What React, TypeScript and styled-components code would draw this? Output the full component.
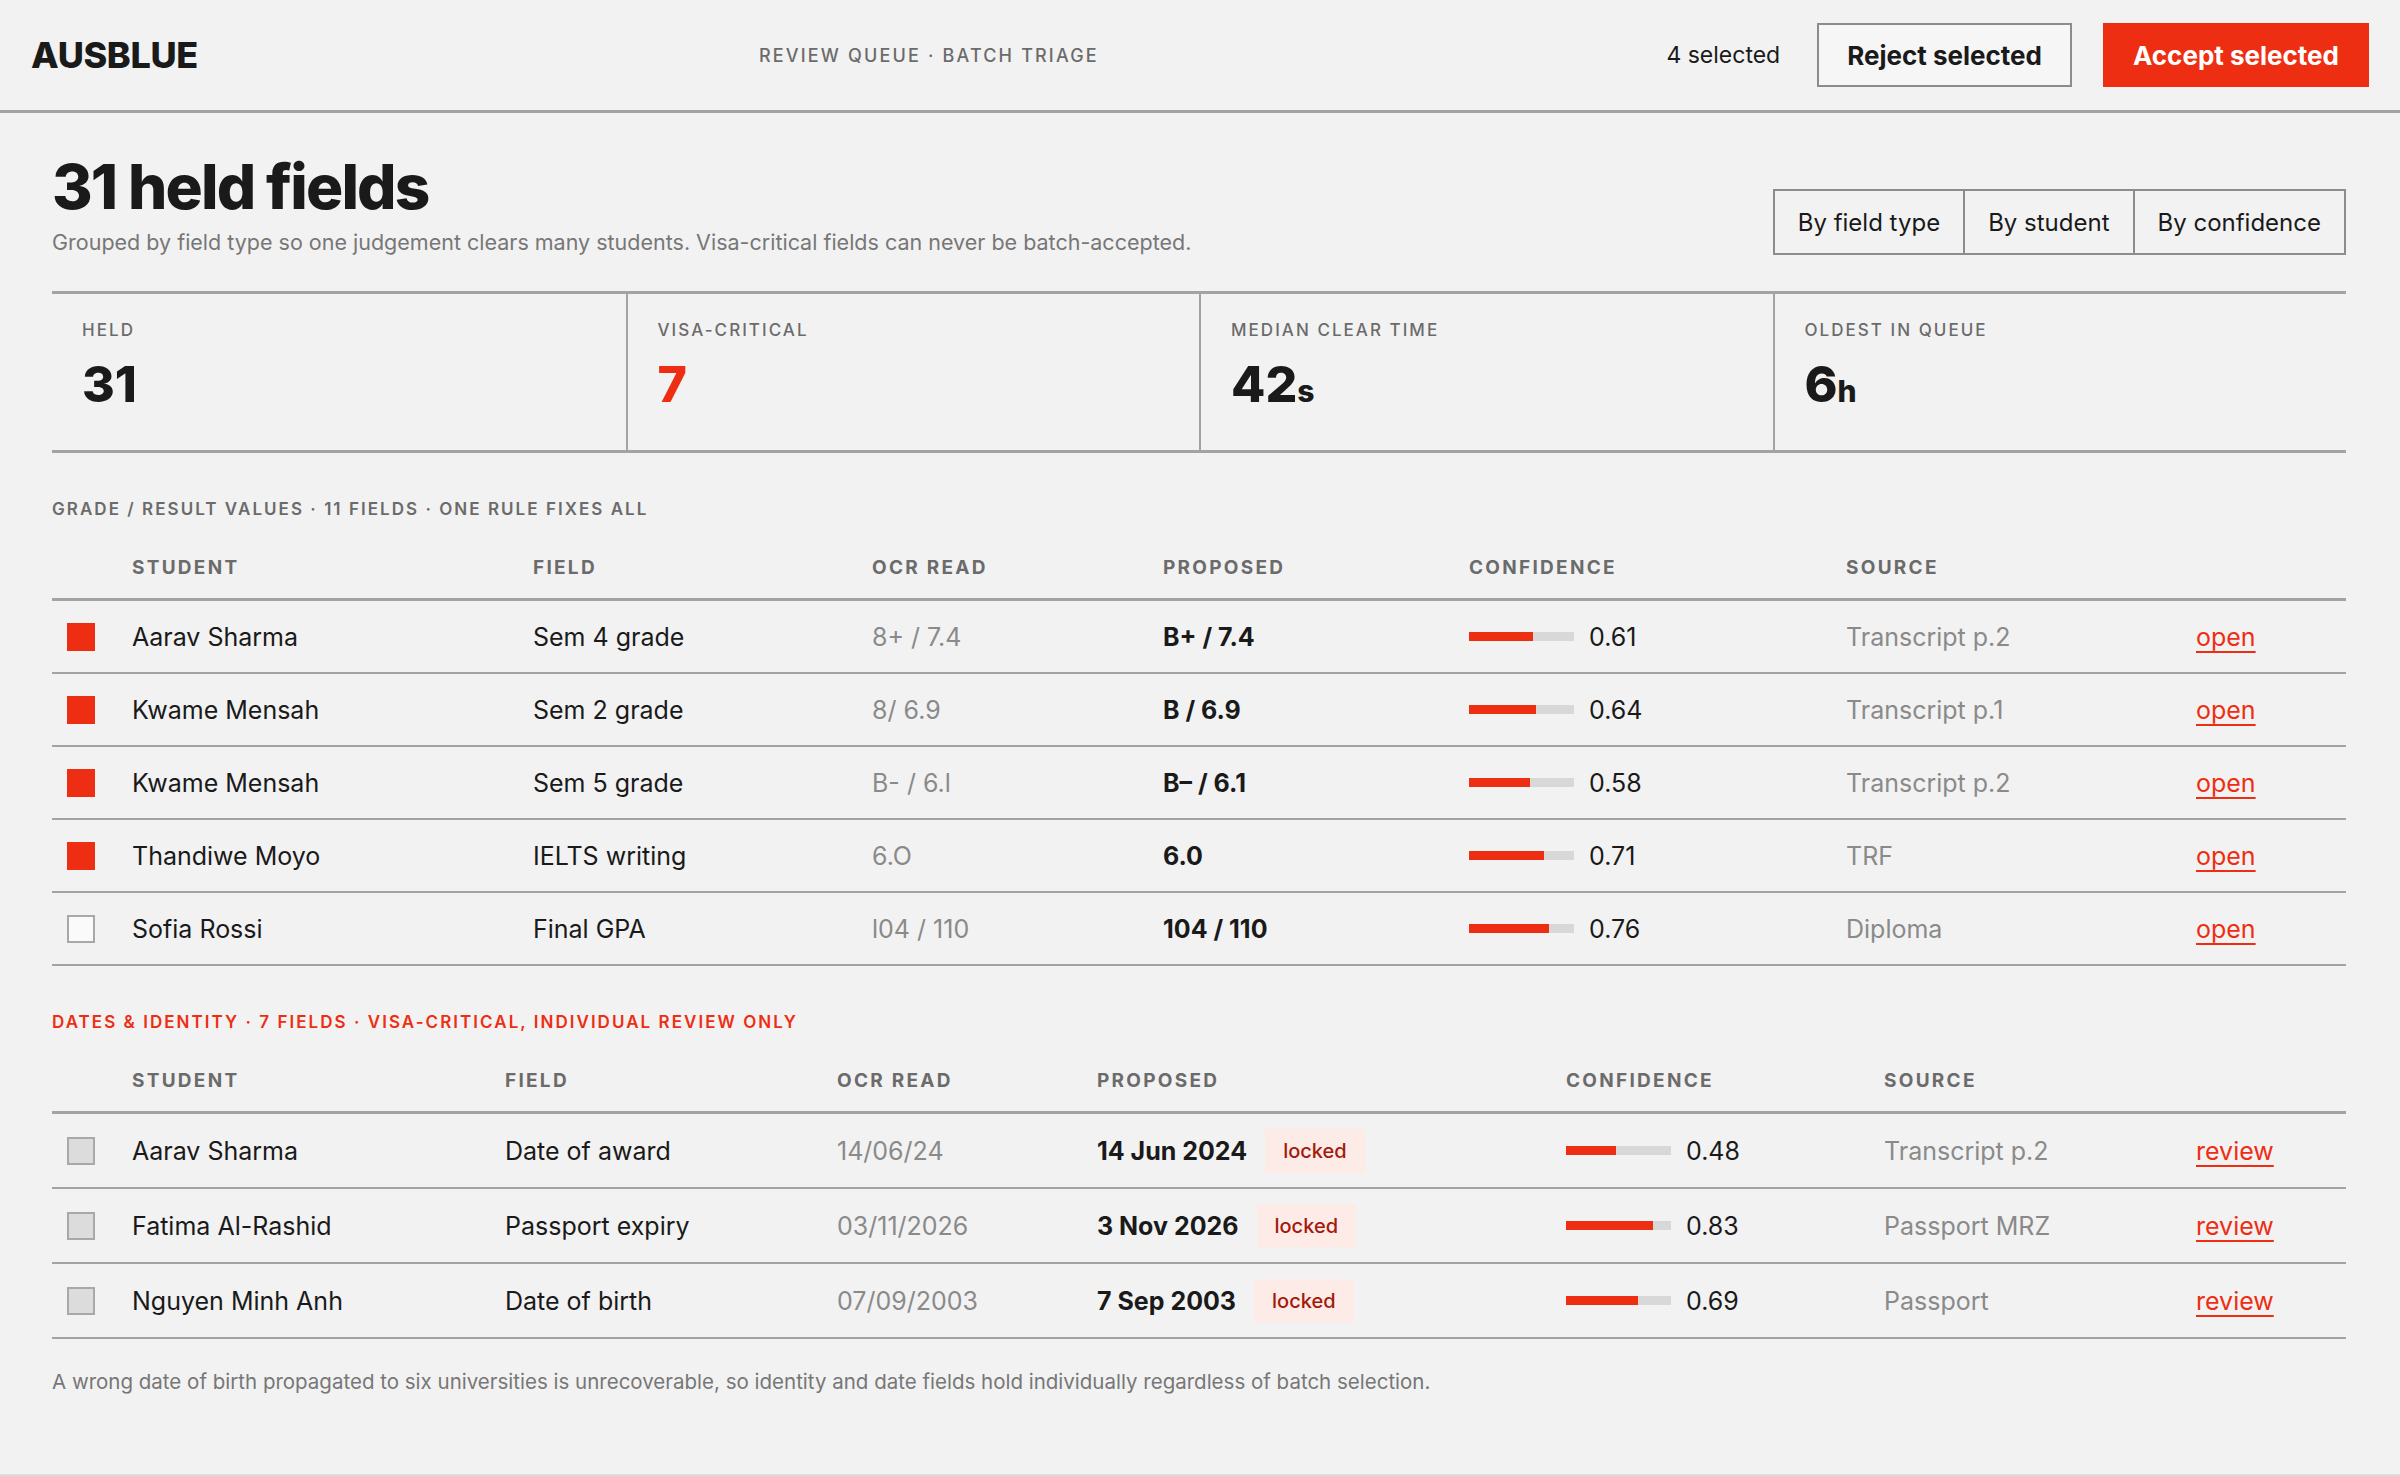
import React from "react";
import styled, { createGlobalStyle } from "styled-components";

const RED = "#ee2e12";
const LINE = "#a3a3a3";

const GlobalStyle = createGlobalStyle`
  body {
    margin: 0;
    background: #f2f2f2;
    font-family: Inter, "Liberation Sans", sans-serif;
    color: #1a1a1a;
  }
`;

const Page = styled.div`
  min-height: 1474px;
  border-bottom: 2px solid #dcdcdc;
`;

const TopBar = styled.header`
  height: 110px;
  border-bottom: 3px solid ${LINE};
  display: flex;
  align-items: center;
  padding: 0 31px;
`;

const Logo = styled.div`
  font-size: 36px;
  font-weight: 800;
  letter-spacing: -0.01em;
  width: 728px;
`;

const Crumb = styled.div`
  flex: 1;
  font-size: 18px;
  letter-spacing: 0.12em;
  color: #6b6b6b;
  font-weight: 500;
`;

const Selected = styled.span`
  font-size: 23px;
  margin-right: 6px;
`;

const Button = styled.button<{ $primary?: boolean }>`
  height: 64px;
  padding: 0 28px;
  font-family: inherit;
  font-size: 26px;
  font-weight: 700;
  margin-left: 31px;
  border: 2px solid ${(p) => (p.$primary ? RED : "#8c8c8c")};
  background: ${(p) => (p.$primary ? RED : "#f6f6f6")};
  color: ${(p) => (p.$primary ? "#fff" : "#1a1a1a")};
`;

const Main = styled.main`
  padding: 40px 54px 0 52px;
`;

const TitleRow = styled.div`
  display: flex;
  justify-content: space-between;
  align-items: flex-end;
`;

const Title = styled.h1`
  margin: 0;
  font-size: 62px;
  font-weight: 800;
  letter-spacing: -0.03em;
  line-height: 1.1;
`;

const Sub = styled.p`
  margin: 8px 0 0;
  font-size: 21.5px;
  color: #777;
`;

const Segments = styled.div`
  display: flex;
  border: 2px solid #8c8c8c;
  margin-bottom: 0;
`;

const Segment = styled.div`
  height: 62px;
  padding: 0 23px;
  display: flex;
  align-items: center;
  font-size: 24px;
  & + & {
    border-left: 2px solid #8c8c8c;
  }
`;

const Stats = styled.div`
  margin-top: 36px;
  display: grid;
  grid-template-columns: repeat(4, 1fr);
  border-top: 3px solid ${LINE};
  border-bottom: 3px solid ${LINE};
`;

const Stat = styled.div`
  padding: 26px 30px 30px;
  height: 100px;
  & + & {
    border-left: 2px solid ${LINE};
  }
`;

const StatLabel = styled.div`
  font-size: 17px;
  letter-spacing: 0.12em;
  color: #6b6b6b;
  font-weight: 500;
`;

const StatValue = styled.div<{ $red?: boolean }>`
  margin-top: 14px;
  font-size: 50px;
  font-weight: 800;
  color: ${(p) => (p.$red ? RED : "#1a1a1a")};
  small {
    font-size: 30px;
  }
`;

const SectionLabel = styled.div<{ $red?: boolean }>`
  margin-top: 46px;
  font-size: 17px;
  font-weight: 600;
  letter-spacing: 0.12em;
  color: ${(p) => (p.$red ? RED : "#6b6b6b")};
`;

const Row = styled.div<{ $cols: string; $head?: boolean; $h: number }>`
  box-sizing: border-box;
  display: grid;
  grid-template-columns: ${(p) => p.$cols};
  align-items: center;
  height: ${(p) => p.$h}px;
  border-bottom: ${(p) => (p.$head ? 3 : 2)}px solid ${LINE};
  font-size: ${(p) => (p.$head ? 19 : 25)}px;
  ${(p) =>
    p.$head &&
    `font-weight: 700; letter-spacing: 0.12em; color: #6b6b6b; margin-top: 18px;`}
`;

const Box = styled.span<{ $kind: "on" | "off" | "lock" }>`
  display: block;
  width: 28px;
  height: 28px;
  margin-left: 15px;
  box-sizing: border-box;
  background: ${(p) => (p.$kind === "on" ? RED : p.$kind === "lock" ? "#dcdcdc" : "#fafafa")};
  border: 2px solid ${(p) => (p.$kind === "on" ? RED : "#a8a8a8")};
`;

const Muted = styled.span`
  color: #8a8a8a;
`;

const Strong = styled.span`
  font-weight: 700;
  display: flex;
  align-items: center;
  gap: 18px;
`;

const Locked = styled.span`
  font-size: 20px;
  font-weight: 500;
  color: #a31a0c;
  background: #fdebe7;
  padding: 10px 18px;
`;

const Conf = styled.span`
  display: flex;
  align-items: center;
  gap: 15px;
`;

const Bar = styled.span`
  width: 105px;
  height: 9px;
  background: #d8d8d8;
  display: block;
  i {
    display: block;
    height: 100%;
    background: ${RED};
  }
`;

const Link = styled.a`
  color: ${RED};
  text-decoration: underline;
  text-underline-offset: 5px;
`;

const Foot = styled.p`
  margin: 30px 0 0;
  font-size: 20.5px;
  color: #777;
`;

const grades = [
  ["on", "Aarav Sharma", "Sem 4 grade", "8+ / 7.4", "B+ / 7.4", 0.61, "Transcript p.2"],
  ["on", "Kwame Mensah", "Sem 2 grade", "8/ 6.9", "B / 6.9", 0.64, "Transcript p.1"],
  ["on", "Kwame Mensah", "Sem 5 grade", "B- / 6.l", "B– / 6.1", 0.58, "Transcript p.2"],
  ["on", "Thandiwe Moyo", "IELTS writing", "6.O", "6.0", 0.71, "TRF"],
  ["off", "Sofia Rossi", "Final GPA", "l04 / 110", "104 / 110", 0.76, "Diploma"],
] as const;

const dates = [
  ["Aarav Sharma", "Date of award", "14/06/24", "14 Jun 2024", 0.48, "Transcript p.2"],
  ["Fatima Al-Rashid", "Passport expiry", "03/11/2026", "3 Nov 2026", 0.83, "Passport MRZ"],
  ["Nguyen Minh Anh", "Date of birth", "07/09/2003", "7 Sep 2003", 0.69, "Passport"],
] as const;

const COLS1 = "80px 401px 339px 291px 306px 377px 350px 1fr";
const COLS2 = "80px 373px 332px 260px 469px 318px 312px 1fr";

function Confidence({ v }: { v: number }) {
  return (
    <Conf>
      <Bar>
        <i style={{ width: `${v * 100}%` }} />
      </Bar>
      {v.toFixed(2)}
    </Conf>
  );
}

export default function App() {
  return (
    <Page>
      <GlobalStyle />
      <TopBar>
        <Logo>AUSBLUE</Logo>
        <Crumb>REVIEW QUEUE · BATCH TRIAGE</Crumb>
        <Selected>4 selected</Selected>
        <Button>Reject selected</Button>
        <Button $primary>Accept selected</Button>
      </TopBar>
      <Main>
        <TitleRow>
          <div>
            <Title>31 held fields</Title>
            <Sub>
              Grouped by field type so one judgement clears many students. Visa-critical fields can
              never be batch-accepted.
            </Sub>
          </div>
          <Segments>
            <Segment>By field type</Segment>
            <Segment>By student</Segment>
            <Segment>By confidence</Segment>
          </Segments>
        </TitleRow>
        <Stats>
          <Stat>
            <StatLabel>HELD</StatLabel>
            <StatValue>31</StatValue>
          </Stat>
          <Stat>
            <StatLabel>VISA-CRITICAL</StatLabel>
            <StatValue $red>7</StatValue>
          </Stat>
          <Stat>
            <StatLabel>MEDIAN CLEAR TIME</StatLabel>
            <StatValue>
              42<small>s</small>
            </StatValue>
          </Stat>
          <Stat>
            <StatLabel>OLDEST IN QUEUE</StatLabel>
            <StatValue>
              6<small>h</small>
            </StatValue>
          </Stat>
        </Stats>

        <SectionLabel>GRADE / RESULT VALUES · 11 FIELDS · ONE RULE FIXES ALL</SectionLabel>
        <Row $cols={COLS1} $head $h={64}>
          <span />
          <span>STUDENT</span>
          <span>FIELD</span>
          <span>OCR READ</span>
          <span>PROPOSED</span>
          <span>CONFIDENCE</span>
          <span>SOURCE</span>
          <span />
        </Row>
        {grades.map((g, i) => (
          <Row key={i} $cols={COLS1} $h={73}>
            <Box $kind={g[0]} />
            <span>{g[1]}</span>
            <span>{g[2]}</span>
            <Muted>{g[3]}</Muted>
            <Strong>{g[4]}</Strong>
            <Confidence v={g[5]} />
            <Muted>{g[6]}</Muted>
            <Link>open</Link>
          </Row>
        ))}

        <SectionLabel $red>
          DATES &amp; IDENTITY · 7 FIELDS · VISA-CRITICAL, INDIVIDUAL REVIEW ONLY
        </SectionLabel>
        <Row $cols={COLS2} $head $h={64}>
          <span />
          <span>STUDENT</span>
          <span>FIELD</span>
          <span>OCR READ</span>
          <span>PROPOSED</span>
          <span>CONFIDENCE</span>
          <span>SOURCE</span>
          <span />
        </Row>
        {dates.map((d, i) => (
          <Row key={i} $cols={COLS2} $h={75}>
            <Box $kind="lock" />
            <span>{d[0]}</span>
            <span>{d[1]}</span>
            <Muted>{d[2]}</Muted>
            <Strong>
              {d[3]}
              <Locked>locked</Locked>
            </Strong>
            <Confidence v={d[4]} />
            <Muted>{d[5]}</Muted>
            <Link>review</Link>
          </Row>
        ))}
        <Foot>
          A wrong date of birth propagated to six universities is unrecoverable, so identity and
          date fields hold individually regardless of batch selection.
        </Foot>
      </Main>
    </Page>
  );
}
